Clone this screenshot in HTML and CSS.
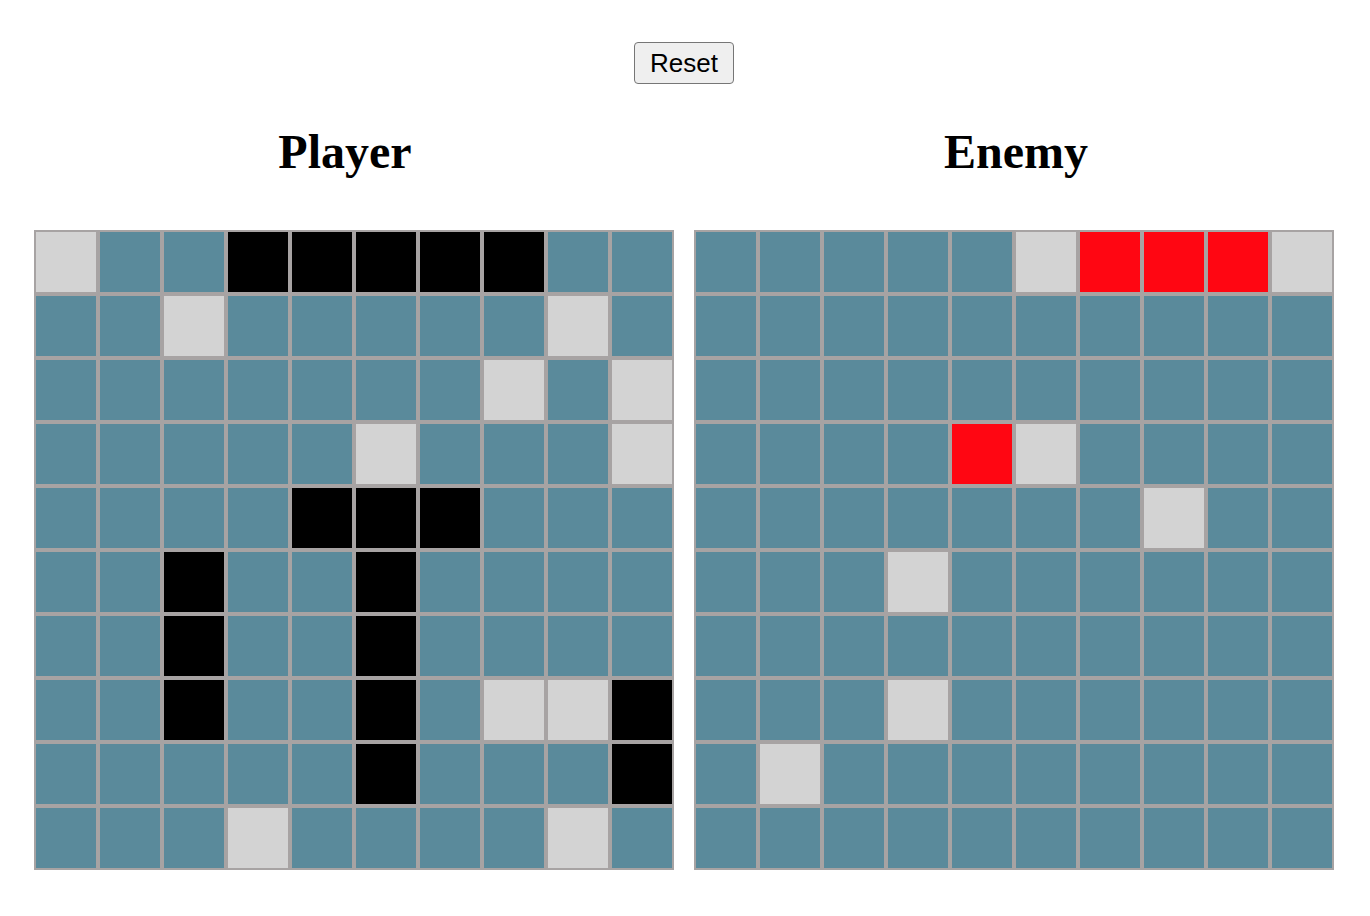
FILE: index.html
```html
<!DOCTYPE html>
<html lang="en">

<head>
  <meta charset="UTF-8">
  <meta name="viewport" content="width=device-width, initial-scale=1.0">
  <title>Battleship</title>

  <link rel="stylesheet" href="styles.css">
</head>

<body>
  <main>
    <div class="top">
      <button id="reset">Reset</button>
    </div>

    <div class="boards">
      <div class="side">
        <h1 class="title-player">Player</h1>
        <div class="board" id="player"></div>
      </div>
      <div class="side">
        <h1 class="title-enemy">Enemy</h1>
        <div class="board" id="enemy"></div>
      </div>
    </div>
  </main>

  <script>
    // w = water, m = miss, s = ship, h = hit
    const player = [
      'mwwssssswm'.replace(/m$/, 'w'),
      'wwmwwwwwmw',
      'wwwwwwwmwm',
      'wwwwwmwwwm',
      'wwwwssswww',
      'wwswwswwww',
      'wwswwswwww',
      'wwswwswmms',
      'wwwwwswwws',
      'wwwmwwwwmw'
    ];

    const enemy = [
      'wwwwwmhhhm',
      'wwwwwwwwww',
      'wwwwwwwwww',
      'wwwwhmwwww',
      'wwwwwwwmww',
      'wwwmwwwwww',
      'wwwwwwwwww',
      'wwwmwwwwww',
      'wmwwwwwwww',
      'wwwwwwwwww'
    ];

    function draw(id, rows) {
      const board = document.getElementById(id);
      rows.forEach(row => {
        for (const c of row) {
          const cell = document.createElement('div');
          cell.className = 'cell ' + c;
          board.appendChild(cell);
        }
      });
    }

    draw('player', player);
    draw('enemy', enemy);
  </script>
</body>

</html>
```

FILE: styles.css
```css
html,
body {
  padding: 0;
  margin: 0;
  background: #fff;
}

.top {
  display: flex;
  justify-content: center;
  padding-top: 42px;
}

#reset {
  width: 100px;
  height: 42px;
  padding: 0;
  margin-right: 2px;
  font-family: "Liberation Sans", Arial, sans-serif;
  font-size: 26px;
  color: #000;
  background: #efefef;
  border: 1px solid #767676;
  border-radius: 4px;
}

.boards {
  display: flex;
  gap: 20px;
  padding-left: 34px;
  margin-top: 40px;
}

.side {
  width: 640px;
}

h1 {
  margin: 0 0 50px;
  font-family: "Liberation Serif", "Times New Roman", serif;
  font-size: 48px;
  line-height: 56px;
  text-align: center;
}

.title-player {
  padding-right: 18px;
}

.title-enemy {
  padding-left: 4px;
}

.board {
  display: grid;
  grid-template-columns: repeat(10, 64px);
  grid-auto-rows: 64px;
}

.cell {
  box-sizing: border-box;
  border: 2px solid #a7a3a3;
  background: #5a8a9b;
}

.cell.m {
  background: #d3d3d3;
}

.cell.s {
  background: #000;
}

.cell.h {
  background: #ff0612;
}
```
